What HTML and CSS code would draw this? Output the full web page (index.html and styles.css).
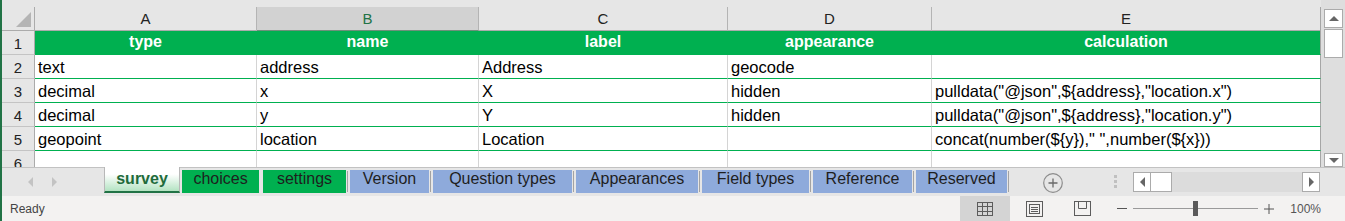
FILE: index.html
```html
<!DOCTYPE html>
<html>
<head>
    <meta charset="UTF-8">
    <title>survey</title>
    <link rel="stylesheet" href="styles.css">
</head>
<body>
<div class="app">
    <div class="sheet">
        <div class="grid">
            <div class="corner"><span class="tri"></span></div>
            <div class="colhdr">A</div>
            <div class="colhdr sel">B</div>
            <div class="colhdr">C</div>
            <div class="colhdr">D</div>
            <div class="colhdr last">E</div>

            <div class="rowhdr">1</div>
            <div class="cell head">type</div>
            <div class="cell head">name</div>
            <div class="cell head">label</div>
            <div class="cell head">appearance</div>
            <div class="cell head last">calculation</div>

            <div class="rowhdr">2</div>
            <div class="cell">text</div>
            <div class="cell">address</div>
            <div class="cell">Address</div>
            <div class="cell">geocode</div>
            <div class="cell last"></div>

            <div class="rowhdr">3</div>
            <div class="cell">decimal</div>
            <div class="cell">x</div>
            <div class="cell">X</div>
            <div class="cell">hidden</div>
            <div class="cell last">pulldata("@json",${address},"location.x")</div>

            <div class="rowhdr">4</div>
            <div class="cell">decimal</div>
            <div class="cell">y</div>
            <div class="cell">Y</div>
            <div class="cell">hidden</div>
            <div class="cell last">pulldata("@json",${address},"location.y")</div>

            <div class="rowhdr">5</div>
            <div class="cell">geopoint</div>
            <div class="cell">location</div>
            <div class="cell">Location</div>
            <div class="cell"></div>
            <div class="cell last">concat(number(${y})," ",number(${x}))</div>

            <div class="rowhdr">6</div>
            <div class="cell"></div>
            <div class="cell"></div>
            <div class="cell"></div>
            <div class="cell"></div>
            <div class="cell last"></div>
        </div>
        <div class="vscroll">
            <div class="vbtn up"><span class="tri-up"></span></div>
            <div class="vthumb"></div>
            <div class="vtrack"></div>
            <div class="vbtn down"><span class="tri-down"></span></div>
        </div>
    </div>

    <div class="tabbar">
        <div class="tabnav"><span class="nav-l"></span><span class="nav-r"></span></div>
        <div class="tab active w-survey">survey</div>
        <div class="tab green w-choices">choices</div>
        <i class="sep blank"></i>
        <div class="tab green w-settings">settings</div>
        <i class="sep"></i>
        <div class="tab blue w-version">Version</div>
        <i class="sep"></i>
        <div class="tab blue w-qtypes">Question types</div>
        <i class="sep"></i>
        <div class="tab blue w-appear">Appearances</div>
        <i class="sep"></i>
        <div class="tab blue w-fields">Field types</div>
        <i class="sep"></i>
        <div class="tab blue w-ref">Reference</div>
        <i class="sep"></i>
        <div class="tab blue w-res">Reserved</div>
        <i class="sep"></i>
        <div class="addsheet">
            <svg width="20" height="20" viewBox="0 0 20 20"><circle cx="10" cy="10" r="9.3" fill="none" stroke="#8c8c8c" stroke-width="1.2"/><path d="M5.5 10h9M10 5.5v9" stroke="#6a6a6a" stroke-width="1.3"/></svg>
        </div>
        <div class="dots"><i></i><i></i><i></i></div>
        <div class="hscroll">
            <div class="hbtn"><span class="tri-left"></span></div>
            <div class="hthumb"></div>
            <div class="htrack"></div>
            <div class="hbtn"><span class="tri-right"></span></div>
        </div>
    </div>

    <div class="status">
        <span class="ready">Ready</span>
        <div class="spacer"></div>
        <div class="view on">
            <svg width="16" height="14" viewBox="0 0 16 14"><rect x=".5" y=".5" width="15" height="13" fill="none" stroke="#5c5c5c"/><path d="M5.5 0v14M10.5 0v14M0 4.5h16M0 9.5h16" stroke="#5c5c5c"/></svg>
        </div>
        <div class="view">
            <svg width="17" height="16" viewBox="0 0 17 16"><rect x=".5" y=".5" width="16" height="15" fill="none" stroke="#5c5c5c"/><rect x="3.5" y="3.5" width="10" height="9" fill="none" stroke="#5c5c5c"/><path d="M5 6.5h7M5 8.5h7M5 10.5h7" stroke="#5c5c5c"/></svg>
        </div>
        <div class="view">
            <svg width="17" height="15" viewBox="0 0 17 15"><rect x=".5" y=".5" width="16" height="14" fill="none" stroke="#5c5c5c"/><path d="M4.5 0v7.5h8V0" fill="none" stroke="#5c5c5c"/></svg>
        </div>
        <svg class="zminus" width="10" height="3" viewBox="0 0 10 3"><path d="M0 1.5h10" stroke="#555"/></svg>
        <div class="slider"><span class="knob"></span></div>
        <svg class="zplus" width="10" height="10" viewBox="0 0 10 10"><path d="M0 5h10M5 0v10" stroke="#555"/></svg>
        <span class="pct">100%</span>
    </div>
</div>
</body>
</html>
```

FILE: styles.css
```css
* {
    margin: 0;
    padding: 0;
    box-sizing: border-box;
}

body {
    width: 1345px;
    height: 221px;
    overflow: hidden;
    background: #f3f2f1;
    font-family: "Liberation Sans", Arial, sans-serif;
}

.app {
    height: 221px;
    border-left: 2px solid #217346;
    display: flex;
    flex-direction: column;
}

/* ---------- sheet ---------- */
.sheet {
    height: 167px;
    flex: none;
    display: flex;
    overflow: hidden;
    background: #e6e6e6;
}

.grid {
    display: grid;
    grid-template-columns: 33px 222px 222px 249px 204px 389px;
    grid-auto-rows: 24px;
    margin-top: 7px;
    align-self: flex-start;
    background: #fff;
}

.corner {
    background: #e6e6e6;
    border-right: 1px solid #ababab;
    border-bottom: 1px solid #ababab;
    display: flex;
    justify-content: flex-end;
    align-items: flex-end;
    padding: 0 3px 3px 0;
}
.tri {
    width: 0;
    height: 0;
    border-left: 15px solid transparent;
    border-bottom: 15px solid #b4b4b4;
}

.colhdr {
    background: #e6e6e6;
    border-right: 1px solid #b4b4b4;
    border-bottom: 1px solid #ababab;
    text-align: center;
    font-size: 15px;
    line-height: 23px;
    color: #222;
}
.colhdr.sel {
    background: #d2d2d2;
    color: #217346;
    border-bottom: 1px solid #6f8f7b;
}
.colhdr.last {
    border-right: 1px solid #a6a6a6;
}

.rowhdr {
    background: #e6e6e6;
    border-right: 1px solid #ababab;
    border-bottom: 1px solid #c4c4c4;
    text-align: center;
    font-size: 15px;
    line-height: 22px;
    padding-top: 2px;
    color: #222;
}

.cell {
    border-right: 1px solid #d4d4d4;
    border-bottom: 1px solid #00b050;
    font-size: 16.5px;
    line-height: 22px;
    padding: 1px 3px 0;
    white-space: nowrap;
    overflow: hidden;
    color: #000;
}
.cell.last {
    border-right: 1px solid #a6a6a6;
}
.cell.head {
    background: #00b050;
    border-right-color: #00b050;
    color: #fff;
    font-size: 16px;
    font-weight: bold;
    text-align: center;
    padding-top: 0;
}
.cell.head.last {
    border-right-color: #a6a6a6;
}

/* ---------- vertical scrollbar ---------- */
.vscroll {
    width: 24px;
    flex: none;
    display: flex;
    flex-direction: column;
    padding: 9px 2px 0 3px;
    background: #dedede;
}
.vbtn {
    height: 19px;
    background: #fff;
    border: 1px solid #ababab;
    display: flex;
    justify-content: center;
    align-items: center;
}
.vbtn.down {
    height: 14px;
}
.vthumb {
    height: 29px;
    margin-top: 1px;
    background: #fff;
    border: 1px solid #ababab;
}
.vtrack {
    flex: 1;
}
.tri-up {
    border-left: 5px solid transparent;
    border-right: 5px solid transparent;
    border-bottom: 5px solid #666;
}
.tri-down {
    border-left: 5px solid transparent;
    border-right: 5px solid transparent;
    border-top: 5px solid #666;
}

/* ---------- sheet tabs ---------- */
.tabbar {
    height: 29px;
    flex: none;
    display: flex;
    align-items: flex-start;
    background: #e6e6e6;
    border-top: 1px solid #c2c2c2;
}

.tabnav {
    width: 102px;
    height: 27px;
    display: flex;
    align-items: center;
    padding-left: 26px;
    gap: 19px;
}
.nav-l {
    border-top: 5px solid transparent;
    border-bottom: 5px solid transparent;
    border-right: 5px solid #c3c3c3;
}
.nav-r {
    border-top: 5px solid transparent;
    border-bottom: 5px solid transparent;
    border-left: 5px solid #c3c3c3;
}

.tab {
    height: 23px;
    margin-top: 2px;
    text-align: center;
    font-size: 16px;
    line-height: 18px;
    color: #1e1e1e;
    white-space: nowrap;
}
.tab.green {
    background: #00b050;
}
.tab.blue {
    background: #8eaadb;
}
.tab.active {
    height: 26px;
    margin-top: -1px;
    margin-right: 2px;
    padding-top: 3px;
    font-weight: bold;
    color: #1f6b3b;
    background: linear-gradient(to bottom, #ffffff 30%, #b3e3c2 100%);
    border-left: 1px solid #b8b8b8;
    border-right: 1px solid #b8b8b8;
    border-bottom: 2px solid #217346;
}

.w-survey { width: 76px; }
.w-choices { width: 77px; }
.w-settings { width: 83px; }
.w-version { width: 79px; }
.w-qtypes { width: 139px; }
.w-appear { width: 122px; }
.w-fields { width: 107px; }
.w-ref { width: 99px; }
.w-res { width: 91px; }

.sep {
    width: 1px;
    height: 21px;
    margin: 3px 2px 0 1px;
    background: #a3a3a3;
}
.sep.blank {
    background: transparent;
}

.addsheet {
    width: 20px;
    height: 20px;
    margin: 5px 0 0 32px;
}

.dots {
    width: 3px;
    margin: 7px 0 0 51px;
    display: flex;
    flex-direction: column;
    gap: 2px;
}
.dots i {
    width: 3px;
    height: 3px;
    background: #c0c0c0;
}

.hscroll {
    width: 187px;
    height: 20px;
    margin: 4px 0 0 16px;
    display: flex;
    background: #dcdcdc;
}
.hbtn {
    width: 18px;
    background: #fff;
    border: 1px solid #ababab;
    display: flex;
    justify-content: center;
    align-items: center;
}
.hthumb {
    width: 21px;
    background: #fff;
    border: 1px solid #ababab;
    border-left: none;
}
.htrack {
    flex: 1;
}
.tri-left {
    border-top: 5px solid transparent;
    border-bottom: 5px solid transparent;
    border-right: 5px solid #666;
}
.tri-right {
    border-top: 5px solid transparent;
    border-bottom: 5px solid transparent;
    border-left: 5px solid #666;
}

/* ---------- status bar ---------- */
.status {
    height: 25px;
    flex: none;
    display: flex;
    align-items: center;
    padding: 0 24px 0 8px;
    background: #f3f2f1;
    font-size: 12px;
    color: #444;
}
.spacer {
    flex: 1;
}
.view {
    width: 48px;
    height: 25px;
    display: flex;
    justify-content: center;
    align-items: center;
}
.view.on {
    width: 50px;
    background: #d4d4d4;
}
.zminus {
    margin-left: 11px;
}
.slider {
    width: 125px;
    height: 1px;
    margin-left: 6px;
    background: #9a9a9a;
    display: flex;
    justify-content: center;
    align-items: center;
}
.knob {
    width: 5px;
    height: 15px;
    background: #5a5a5a;
}
.zplus {
    margin-left: 6px;
}
.pct {
    margin-left: 16px;
    color: #555;
}
```
